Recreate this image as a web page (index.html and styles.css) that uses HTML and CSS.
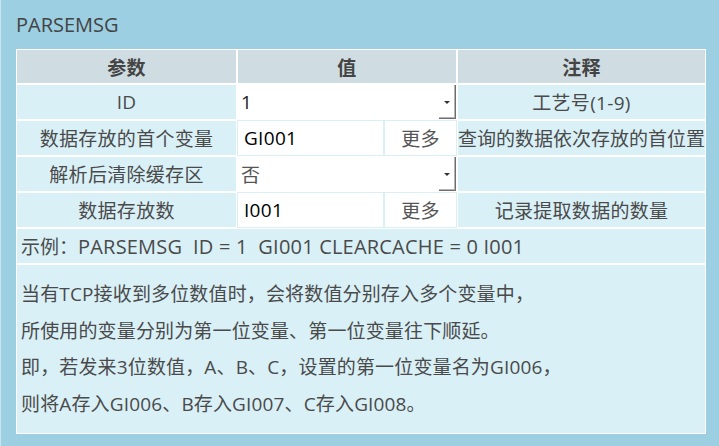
FILE: index.html
```html
<!DOCTYPE html>
<html lang="zh-CN">
<head>
<meta charset="utf-8">
<title>PARSEMSG</title>
<link rel="stylesheet" href="styles.css">
</head>
<body>
<div class="page">
  <h1 class="title">PARSEMSG</h1>
  <div class="grid">
    <div class="c hd">参数</div>
    <div class="c hd span2">值</div>
    <div class="c hd">注释</div>

    <div class="c">ID</div>
    <div class="c sel span2"><span class="sel-val dark">1</span><span class="sel-btn"><span class="arrow"></span></span></div>
    <div class="c">工艺号(1-9)</div>

    <div class="c">数据存放的首个变量</div>
    <div class="c inp">GI001</div>
    <div class="c more">更多</div>
    <div class="c tight">查询的数据依次存放的首位置</div>

    <div class="c">解析后清除缓存区</div>
    <div class="c sel span2"><span class="sel-val">否</span><span class="sel-btn"><span class="arrow"></span></span></div>
    <div class="c"></div>

    <div class="c">数据存放数</div>
    <div class="c inp">I001</div>
    <div class="c more">更多</div>
    <div class="c">记录提取数据的数量</div>

    <div class="c example span4"><span class="cjk">示例：</span>PARSEMSG  ID = 1  GI001 CLEARCACHE = 0 I001</div>

    <div class="c desc span4">
      <p>当有TCP接收到多位数值时，会将数值分别存入多个变量中，</p>
      <p>所使用的变量分别为第一位变量、第一位变量往下顺延。</p>
      <p>即，若发来3位数值，A、B、C，设置的第一位变量名为GI006，</p>
      <p>则将A存入GI006、B存入GI007、C存入GI008。</p>
    </div>
  </div>
</div>
</body>
</html>
```

FILE: styles.css
```css
html, body {
  margin: 0;
  padding: 0;
  background: #9bcfe1;
}

body {
  font-family: "Open Sans", "Noto Sans CJK SC", sans-serif;
  color: #4a4a4a;
}

.page {
  box-sizing: border-box;
  min-height: 446px;
  border-left: 1px solid #c8e4ee;
  padding-left: 15px;
}

.title {
  margin: 0 0 12px 0;
  padding-top: 13px;
  font-size: 20px;
  line-height: 24px;
  font-weight: normal;
  color: #444;
}

.grid {
  display: grid;
  width: 690px;
  grid-template-columns: 221px 147px 73px 249px;
  grid-template-rows: 35px repeat(5, 36px) 170px;
  background: #fff;
  font-size: 19px;
  letter-spacing: 0.3px;
}

.c {
  box-sizing: border-box;
  border: 1px solid #fff;
  background: #d9f0f7;
  display: flex;
  align-items: center;
  justify-content: center;
  white-space: nowrap;
  overflow: hidden;
}

.span2 { grid-column: span 2; }
.span4 { grid-column: span 4; }

.hd {
  background: #cfdde2;
  font-weight: bold;
  color: #444;
}

.tight { justify-content: flex-start; padding-left: 0; letter-spacing: 0; }

.sel {
  background: #fff;
  justify-content: space-between;
  align-items: stretch;
}

.sel-val {
  display: flex;
  align-items: center;
  padding-left: 3px;
  color: #555;
}

.sel-val.dark { color: #222; }

.sel-btn {
  width: 17px;
  box-sizing: border-box;
  border-right: 1px solid #6e6e6e;
  border-bottom: 1px solid #6e6e6e;
  box-shadow: inset -1px -1px 0 #b4b4b4;
  display: flex;
  align-items: center;
  justify-content: center;
}

.arrow {
  width: 0;
  height: 0;
  border-left: 3px solid transparent;
  border-right: 3px solid transparent;
  border-top: 3px solid #333;
  margin-top: 1px;
}

.inp {
  background: #fff;
  border-color: #d9f0f7;
  justify-content: flex-start;
  padding-left: 6px;
  color: #000;
}

.more {
  background: #fff;
  border-color: #d9f0f7;
  color: #555;
}

.example {
  justify-content: flex-start;
  padding-left: 4px;
  white-space: pre;
  font-size: 20px;
  letter-spacing: 0.2px;
}

.example .cjk {
  font-size: 19px;
  letter-spacing: 0;
}

.desc {
  display: block;
  padding: 11px 4px 0;
  letter-spacing: 0.15px;
}

.desc p {
  margin: 0;
  line-height: 36.7px;
}
```
